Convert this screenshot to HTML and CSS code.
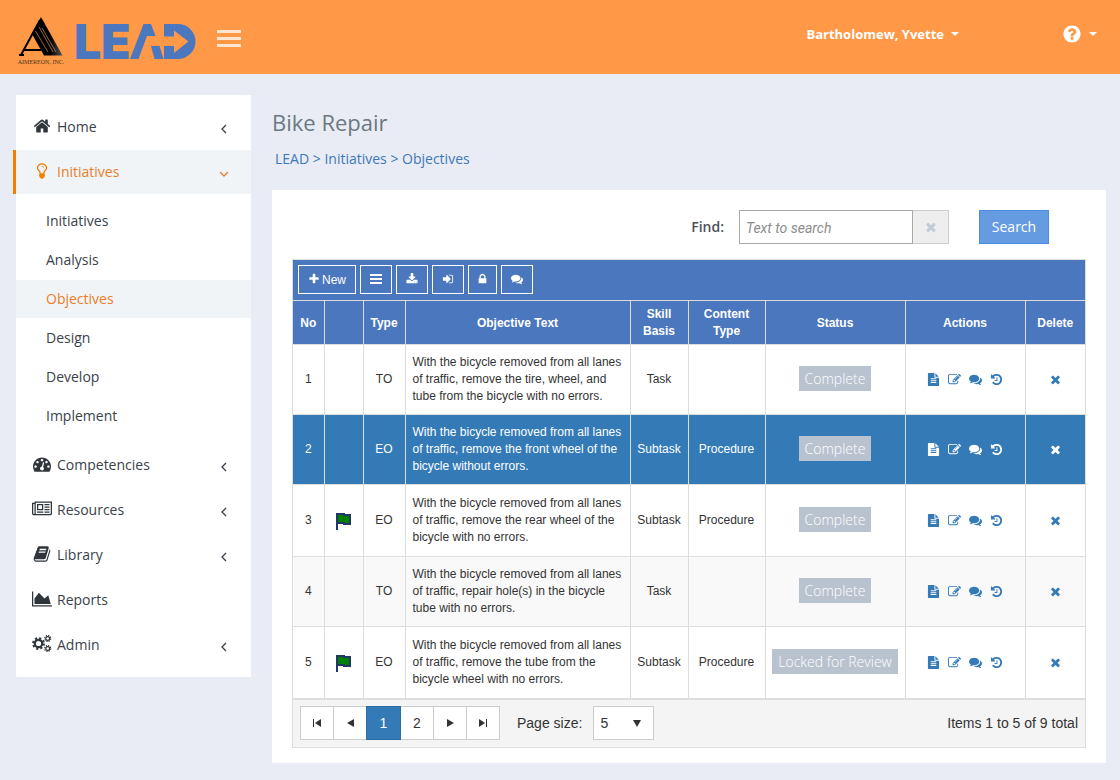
FILE: index.html
```html
<!DOCTYPE html>
<html lang="en">
<head>
<meta charset="utf-8">
<title>LEAD - Objectives</title>
<link rel="stylesheet" href="styles.css">
</head>
<body>
<svg class="sprite" aria-hidden="true">
  <symbol id="i-home" viewBox="0 0 1792 1792"><path d="M1472 992v480q0 26-19 45t-45 19h-384v-384h-256v384h-384q-26 0-45-19t-19-45v-480q0-1 .5-3t.5-3l575-474 575 474q1 2 1 6zm223-69l-62 74q-8 9-21 11h-3q-13 0-21-7l-692-577-692 577q-12 8-24 7-13-2-21-11l-62-74q-8-10-7-23.5t11-21.5l719-599q32-26 76-26t76 26l244 204v-195q0-14 9-23t23-9h192q14 0 23 9t9 23v408l219 182q10 8 11 21.5t-7 23.5z"/></symbol>
  <symbol id="i-bulb" viewBox="0 0 1792 1792"><path d="M1120 576q0 13-9.500 22.500t-22.500 9.500-22.500-9.500-9.500-22.500q0-46-54-71t-106-25q-13 0-22.500-9.500t-9.500-22.500 9.500-22.500 22.500-9.500q50 0 99.500 16t87 54 37.500 90zm160 0q0-72-34.500-134t-90-101.500-123-62-136.500-22.500-136.500 22.500-123 62-90 101.500-34.500 134q0 101 68 180 10 11 30.500 33t30.500 33q128 153 141 298h228q13-145 141-298 10-11 30.500-33t30.500-33q68-79 68-180zm128 0q0 155-103 268-45 49-74.500 87t-59.500 95.500-34 107.500q47 28 47 82 0 37-25 64 25 27 25 64 0 52-45 81 13 23 13 47 0 46-31.500 71t-77.500 25q-20 44-60 70t-87 26-87-26-60-70q-46 0-77.500-25t-31.500-71q0-24 13-47-45-29-45-81 0-37 25-64-25-27-25-64 0-54 47-82-4-50-34-107.500t-59.500-95.500-74.500-87q-103-113-103-268 0-99 44.500-184.500t117-142 164-89 186.500-32.500 186.500 32.500 164 89 117 142 44.500 184.500z"/></symbol>
  <symbol id="i-gauge" viewBox="0 0 1792 1792"><path d="M384 1152q0-53-37.500-90.500t-90.500-37.500-90.500 37.500-37.500 90.500 37.500 90.500 90.500 37.500 90.500-37.500 37.500-90.500zm192-448q0-53-37.500-90.500t-90.500-37.500-90.500 37.500-37.500 90.500 37.500 90.500 90.500 37.500 90.500-37.500 37.500-90.500zm428 481l101-382q6-26-7.500-48.500t-38.500-29.500-48 6.500-30 39.500l-101 382q-60 5-107 43.500t-63 98.500q-20 77 20 146t117 89 146-20 89-117q16-60-6-117t-72-91zm660-33q0-53-37.500-90.500t-90.500-37.500-90.500 37.500-37.500 90.500 37.500 90.500 90.500 37.500 90.500-37.500 37.500-90.500zm-640-640q0-53-37.500-90.500t-90.500-37.500-90.500 37.500-37.500 90.500 37.500 90.500 90.500 37.500 90.500-37.500 37.500-90.500zm448 192q0-53-37.500-90.500t-90.500-37.500-90.500 37.500-37.500 90.500 37.500 90.500 90.500 37.500 90.500-37.500 37.500-90.500zm320 448q0 261-141 483-19 29-54 29h-1402q-35 0-54-29-141-221-141-483 0-182 71-348t191-286 286-191 348-71 348 71 286 191 191 286 71 348z"/></symbol>
  <symbol id="i-news" viewBox="0 0 2048 1792"><path d="M1024 512h-384v384h384v-384zm128 640v128h-640v-128h640zm0-768v640h-640v-640h640zm640 768v128h-512v-128h512zm0-256v128h-512v-128h512zm0-256v128h-512v-128h512zm0-256v128h-512v-128h512zm-1536 960v-960h-128v960q0 26 19 45t45 19 45-19 19-45zm1664 0v-1088h-1536v1088q0 33-11 64h1483q26 0 45-19t19-45zm128-1216v1216q0 80-56 136t-136 56h-1664q-80 0-136-56t-56-136v-1088h256v-128h1792z"/></symbol>
  <symbol id="i-book" viewBox="0 0 1792 1792"><path d="M1703 478q40 57 18 129l-275 906q-19 64-76.500 107.500t-122.500 43.500h-923q-77 0-148.500-53.500t-99.500-131.500q-24-67-2-127 0-4 3-27t4-37q1-8-3-21.500t-3-19.500q2-11 8-21t16.500-23.500 16.500-23.500q23-38 45-91.500t30-91.500q3-10 .5-30t-.5-28q3-11 17-28t17-23q21-36 42-92t25-90q1-9-2.500-32t.5-28q4-13 22-30.500t22-22.500q19-26 42.500-84.500t27.500-96.500q1-8-3-25.500t-2-26.500q2-8 9-18t18-23 17-21q8-12 16.500-30.500t15-35 16-36 19.500-32 26.500-23.500 36-11.500 47.500 5.500l-1 3q38-9 51-9h761q74 0 114 56t18 130l-274 906q-36 119-71.500 153.500t-128.500 34.500h-869q-27 0-38 15-11 16-1 43 24 70 144 70h923q29 0 56-15.500t35-41.500l300-987q7-22 5-57 38 15 59 43zm-1064 2q-4 13 2 22.500t20 9.500h608q13 0 25.500-9.500t16.500-22.500l21-64q4-13-2-22.500t-20-9.500h-608q-13 0-25.500 9.500t-16.500 22.500zm-83 256q-4 13 2 22.500t20 9.500h608q13 0 25.500-9.500t16.500-22.500l21-64q4-13-2-22.500t-20-9.500h-608q-13 0-25.500 9.500t-16.500 22.500z"/></symbol>
  <symbol id="i-chart" viewBox="0 0 2048 1792"><path d="M2048 1536v128h-2048v-1536h128v1408h1920zm-384-1024l256 896h-1664v-576l448-576 576 576z"/></symbol>
  <symbol id="i-cogs" viewBox="0 0 20 18">
    <g fill="none" stroke="currentColor">
      <circle cx="6.500" cy="8.500" r="3.700" stroke-width="2.200"/><circle cx="6.500" cy="8.500" r="5.500" stroke-width="1.800" stroke-dasharray="2.200 2.120"/>
      <circle cx="15.700" cy="3.500" r="1.900" stroke-width="1.200"/><circle cx="15.700" cy="3.500" r="3" stroke-width="1.200" stroke-dasharray="1.300 1.056"/>
      <circle cx="15.700" cy="13.500" r="1.900" stroke-width="1.200"/><circle cx="15.700" cy="13.500" r="3" stroke-width="1.200" stroke-dasharray="1.300 1.056"/>
    </g>
  </symbol>
  <symbol id="i-left" viewBox="0 0 10 10"><path d="M7 1L3 5l4 4" fill="none" stroke="currentColor" stroke-width="1.300"/></symbol>
  <symbol id="i-down" viewBox="0 0 10 10"><path d="M1 3l4 4 4-4" fill="none" stroke="currentColor" stroke-width="1.300"/></symbol>
  <symbol id="i-plus" viewBox="0 0 1792 1792"><path d="M1600 736v192q0 40-28 68t-68 28h-416v416q0 40-28 68t-68 28h-192q-40 0-68-28t-28-68v-416h-416q-40 0-68-28t-28-68v-192q0-40 28-68t68-28h416v-416q0-40 28-68t68-28h192q40 0 68 28t28 68v416h416q40 0 68 28t28 68z"/></symbol>
  <symbol id="i-bars" viewBox="0 0 12 12"><path d="M0 1h12v2H0zM0 5h12v2H0zM0 9h12v2H0z"/></symbol>
  <symbol id="i-times" viewBox="0 0 1792 1792"><path d="M1490 1322q0 40-28 68l-136 136q-28 28-68 28t-68-28l-294-294-294 294q-28 28-68 28t-68-28l-136-136q-28-28-28-68t28-68l294-294-294-294q-28-28-28-68t28-68l136-136q28-28 68-28t68 28l294 294 294-294q28-28 68-28t68 28l136 136q28 28 28 68t-28 68l-294 294 294 294q28 28 28 68z"/></symbol>
  <symbol id="i-help" viewBox="0 0 1792 1792"><path d="M1024 1376v-192q0-14-9-23t-23-9h-192q-14 0-23 9t-9 23v192q0 14 9 23t23 9h192q14 0 23-9t9-23zm256-672q0-88-55.500-163t-138.500-116-170-41q-243 0-371 213-15 24 8 42l132 100q7 6 19 6 16 0 25-12 53-68 86-92 34-24 86-24 48 0 85.500 26t37.500 59q0 38-20 61t-68 45q-63 28-115.500 86.500t-52.500 125.500v36q0 14 9 23t23 9h192q14 0 23-9t9-23q0-19 21.500-49.500t54.500-49.500q32-18 49-28.500t46-35 44.500-48 28-60.500 12.500-81zm384 192q0 209-103 385.500t-279.500 279.500-385.500 103-385.500-103-279.500-279.500-103-385.500 103-385.500 279.500-279.500 385.500-103 385.500 103 279.500 279.500 103 385.500z"/></symbol>
  <symbol id="i-lock" viewBox="256 0 1280 1792"><path d="M640 768h512v-192q0-106-75-181t-181-75-181 75-75 181v192zm832 96v576q0 40-28 68t-68 28h-960q-40 0-68-28t-28-68v-576q0-40 28-68t68-28h32v-192q0-184 132-316t316-132 316 132 132 316v192h32q40 0 68 28t28 68z"/></symbol>
  <symbol id="i-download" viewBox="0 0 1792 1792"><path d="M1344 1344q0-26-19-45t-45-19-45 19-19 45 19 45 45 19 45-19 19-45zm256 0q0-26-19-45t-45-19-45 19-19 45 19 45 45 19 45-19 19-45zm128-224v320q0 40-28 68t-68 28h-1472q-40 0-68-28t-28-68v-320q0-40 28-68t68-28h465l135 136q58 56 136 56t136-56l136-136h464q40 0 68 28t28 68zm-325-569q17 41-14 70l-448 448q-18 19-45 19t-45-19l-448-448q-31-29-14-70 17-39 59-39h256v-448q0-26 19-45t45-19h256q26 0 45 19t19 45v448h256q42 0 59 39z"/></symbol>
  <symbol id="i-signin" viewBox="0 0 1792 1792"><path d="M1312 896q0 26-19 45l-544 544q-19 19-45 19t-45-19-19-45v-288h-448q-26 0-45-19t-19-45v-384q0-26 19-45t45-19h448v-288q0-26 19-45t45-19 45 19l544 544q19 19 19 45zm352-352v704q0 119-84.500 203.500t-203.500 84.500h-320q-13 0-22.500-9.500t-9.500-22.500q0-4-1-20t-.5-26.500 3-23.500 10-19.500 20.500-6.500h320q66 0 113-47t47-113v-704q0-66-47-113t-113-47h-312l-11.500-1-11.500-3-8-5.500-7-9-2-13.500q0-4-1-20t-.5-26.500 3-23.500 10-19.500 20.500-6.500h320q119 0 203.500 84.500t84.500 203.500z"/></symbol>
  <symbol id="i-comments" viewBox="0 0 1792 1792"><path d="M1408 768q0 139-94 257t-256.500 186.500-353.500 68.500q-86 0-176-16-124 88-278 128-36 9-86 16h-3q-11 0-20.500-8t-11.500-21q-1-3-1-6.500t.5-6.500 2-6l2.500-5 3.500-5.500 4-5 4.500-5 4-4.500q5-6 23-25t26-29.500 22.500-29 25-38.500 20.500-44q-124-72-195-177t-71-224q0-139 94-257t256.500-186.500 353.500-68.500 353.500 68.500 256.500 186.500 94 257zm384 256q0 120-71 224.500t-195 176.500q10 24 20.500 44t25 38.500 22.500 29 26 29.500 23 25q1 1 4 4.500t4.500 5 4 5 3.500 5.500l2.500 5 2 6 .5 6.500-1 6.500q-3 14-13 22t-22 7q-50-7-86-16-154-40-278-128-90 16-176 16-271 0-472-132 58 4 88 4 161 0 309-45t264-129q125-92 192-212t67-254q0-77-23-152 129 71 204 178t75 230z"/></symbol>
  <symbol id="i-file" viewBox="0 0 1792 1792"><path d="M1596 476q14 14 28 36h-472v-472q22 14 36 28zm-476 164h544v1056q0 40-28 68t-68 28h-1344q-40 0-68-28t-28-68v-1600q0-40 28-68t68-28h800v544q0 40 28 68t68 28zm160 736v-128h-768v128zm0-256v-128h-768v128zm0-256v-128h-768v128z"/></symbol>
  <symbol id="i-edit" viewBox="0 0 1792 1792"><path d="M888 1184l116-116-152-152-116 116v56h96v96h56zm440-720q-16-16-33 1l-350 350q-17 17-1 33t33-1l350-350q17-17 1-33zm80 594v190q0 119-84.500 203.500t-203.500 84.500h-832q-119 0-203.500-84.500t-84.500-203.500v-832q0-119 84.500-203.500t203.500-84.500h832q63 0 117 25 15 7 18 23 3 17-9 29l-49 49q-14 14-32 8-23-6-45-6h-832q-66 0-113 47t-47 113v832q0 66 47 113t113 47h832q66 0 113-47t47-113v-126q0-13 9-22l64-64q15-15 35-7t20 29zm-96-738l288 288-672 672h-288v-288zm444 132l-92 92-288-288 92-92q28-28 68-28t68 28l152 152q28 28 28 68t-28 68z"/></symbol>
  <symbol id="i-history" viewBox="0 0 1792 1792"><path d="M1664 896q0 156-61 298t-164 245-245 164-298 61q-172 0-327-72.500t-264-204.500q-7-10-6.500-22.500t8.500-20.500l137-138q10-9 25-9 16 2 23 12 73 95 179 147t225 52q104 0 198.500-40.500t163.500-109.500 109.500-163.500 40.500-198.500-40.500-198.500-109.500-163.500-163.500-109.500-198.500-40.500q-98 0-188 35.500t-160 101.500l137 138q31 30 14 69-17 40-59 40h-448q-26 0-45-19t-19-45v-448q0-42 40-59 39-17 69 14l130 129q107-101 244.500-156.500t284.500-55.500q156 0 298 61t245 164 164 245 61 298zm-640-288v448q0 14-9 23t-23 9h-320q-14 0-23-9t-9-23v-64q0-14 9-23t23-9h224v-352q0-14 9-23t23-9h64q14 0 23 9t9 23z"/></symbol>
  <symbol id="i-flag" viewBox="0 0 16 17"><path d="M1 17V1h7v1h6v9H8v-1H1" fill="#008000" stroke="#1f3864" stroke-width="2"/></symbol>
  <symbol id="i-first" viewBox="0 0 8 8"><path d="M0 0h1v8H0zM8 0v8L2 4z"/></symbol>
  <symbol id="i-prev" viewBox="0 0 8 8"><path d="M8 0v8L1 4z"/></symbol>
  <symbol id="i-next" viewBox="0 0 8 8"><path d="M1 0v8l7-4z"/></symbol>
  <symbol id="i-last" viewBox="0 0 8 8"><path d="M7 0h1v8H7zM0 0v8l6-4z"/></symbol>
</svg>

<header class="topbar">
  <a class="brand" href="#" aria-label="Aimereon LEAD">
    <svg class="emblem" viewBox="0 0 50 50">
      <defs><linearGradient id="leg" x1="0" x2="1"><stop offset="0.600" stop-color="#000"/><stop offset="1" stop-color="#555"/></linearGradient></defs>
      <path d="M24 1L45.500 39.500H27L15 18z" fill="url(#leg)"/>
      <path d="M23 4L4 39M6 34h18M2 39h5" fill="none" stroke="#000" stroke-width="2"/>
      <path d="M18.500 15L31 36M22 11l14 25M25 12l14 24" fill="none" stroke="#d88b52" stroke-width="0.700"/>
      <text class="emblem-name" x="24" y="48" text-anchor="middle">AIMEREON, INC.</text>
    </svg>
    <svg class="wordmark" viewBox="0 0 119 36">
      <text class="wordmark-text" x="-3" y="35">L</text>
      <text class="wordmark-text" x="24" y="35">E</text>
      <path d="M53 35L66.500 0H74l4.500 12H70l-8.500 23zM74 22h8.500l4 13H77.500z"/>
      <path d="M87 0h14a17.500 17.500 0 0 1 0 35H87V22h10v7l14.500-11.500L97 6.500v6H87z"/>
    </svg>
  </a>
  <button class="menu-toggle" type="button" aria-label="Toggle menu"><span></span><span></span><span></span></button>
  <nav class="account">
    <button class="account-button user" type="button">Bartholomew, Yvette <span class="caret"></span></button>
    <button class="account-button" type="button" aria-label="Help"><svg class="help-icon"><use href="#i-help"/></svg><span class="caret"></span></button>
  </nav>
</header>

<div class="page">
  <nav class="sidebar">
    <a class="nav-item" href="#"><svg class="nav-icon"><use href="#i-home"/></svg><span>Home</span><svg class="angle"><use href="#i-left"/></svg></a>
    <a class="nav-item active" href="#"><svg class="nav-icon"><use href="#i-bulb"/></svg><span>Initiatives</span><svg class="angle"><use href="#i-down"/></svg></a>
    <div class="subnav">
      <a href="#">Initiatives</a>
      <a href="#">Analysis</a>
      <a class="current" href="#">Objectives</a>
      <a href="#">Design</a>
      <a href="#">Develop</a>
      <a href="#">Implement</a>
    </div>
    <a class="nav-item" href="#"><svg class="nav-icon"><use href="#i-gauge"/></svg><span>Competencies</span><svg class="angle"><use href="#i-left"/></svg></a>
    <a class="nav-item" href="#"><svg class="nav-icon"><use href="#i-news"/></svg><span>Resources</span><svg class="angle"><use href="#i-left"/></svg></a>
    <a class="nav-item" href="#"><svg class="nav-icon"><use href="#i-book"/></svg><span>Library</span><svg class="angle"><use href="#i-left"/></svg></a>
    <a class="nav-item" href="#"><svg class="nav-icon"><use href="#i-chart"/></svg><span>Reports</span></a>
    <a class="nav-item" href="#"><svg class="nav-icon"><use href="#i-cogs"/></svg><span>Admin</span><svg class="angle"><use href="#i-left"/></svg></a>
  </nav>

  <main class="main">
    <h1 class="title">Bike Repair</h1>
    <nav class="breadcrumb"><a href="#">LEAD</a> &gt; <a href="#">Initiatives</a> &gt; <a href="#">Objectives</a></nav>

    <section class="card">
      <form class="search">
        <label for="find">Find:</label>
        <div class="search-group">
          <input id="find" class="search-input" type="text" placeholder="Text to search">
          <button class="search-clear" type="button" aria-label="Clear"><svg class="icon"><use href="#i-times"/></svg></button>
        </div>
        <button class="search-button" type="button">Search</button>
      </form>

      <div class="grid">
        <div class="toolbar">
          <button class="tool" type="button"><svg class="icon"><use href="#i-plus"/></svg>New</button>
          <button class="tool" type="button" aria-label="List"><svg class="icon"><use href="#i-bars"/></svg></button>
          <button class="tool" type="button" aria-label="Download"><svg class="icon"><use href="#i-download"/></svg></button>
          <button class="tool" type="button" aria-label="Import"><svg class="icon"><use href="#i-signin"/></svg></button>
          <button class="tool" type="button" aria-label="Lock"><svg class="icon narrow"><use href="#i-lock"/></svg></button>
          <button class="tool" type="button" aria-label="Comments"><svg class="icon"><use href="#i-comments"/></svg></button>
        </div>
        <table class="objectives">
          <colgroup><col class="c-no"><col class="c-flag"><col class="c-type"><col><col class="c-skill"><col class="c-content"><col class="c-status"><col class="c-actions"><col class="c-delete"></colgroup>
          <thead>
            <tr><th>No</th><th></th><th>Type</th><th>Objective Text</th><th>Skill Basis</th><th>Content Type</th><th>Status</th><th>Actions</th><th>Delete</th></tr>
          </thead>
          <tbody>
            <tr>
              <td>1</td><td></td><td>TO</td><td class="text">With the bicycle removed from all lanes of traffic, remove the tire, wheel, and tube from the bicycle with no errors.</td><td>Task</td><td></td>
              <td><span class="status">Complete</span></td>
              <td><div class="actions"><a href="#" aria-label="View"><svg class="icon"><use href="#i-file"/></svg></a><a href="#" aria-label="Edit"><svg class="icon"><use href="#i-edit"/></svg></a><a href="#" aria-label="Comments"><svg class="icon"><use href="#i-comments"/></svg></a><a href="#" aria-label="History"><svg class="icon"><use href="#i-history"/></svg></a></div></td>
              <td><div class="actions"><a href="#" aria-label="Delete"><svg class="icon"><use href="#i-times"/></svg></a></div></td>
            </tr>
            <tr class="selected">
              <td>2</td><td></td><td>EO</td><td class="text">With the bicycle removed from all lanes of traffic, remove the front wheel of the bicycle without errors.</td><td>Subtask</td><td>Procedure</td>
              <td><span class="status">Complete</span></td>
              <td><div class="actions"><a href="#" aria-label="View"><svg class="icon"><use href="#i-file"/></svg></a><a href="#" aria-label="Edit"><svg class="icon"><use href="#i-edit"/></svg></a><a href="#" aria-label="Comments"><svg class="icon"><use href="#i-comments"/></svg></a><a href="#" aria-label="History"><svg class="icon"><use href="#i-history"/></svg></a></div></td>
              <td><div class="actions"><a href="#" aria-label="Delete"><svg class="icon"><use href="#i-times"/></svg></a></div></td>
            </tr>
            <tr class="flagged">
              <td>3</td><td><svg class="flag" role="img" aria-label="Flagged"><use href="#i-flag"/></svg></td><td>EO</td><td class="text">With the bicycle removed from all lanes of traffic, remove the rear wheel of the bicycle with no errors.</td><td>Subtask</td><td>Procedure</td>
              <td><span class="status">Complete</span></td>
              <td><div class="actions"><a href="#" aria-label="View"><svg class="icon"><use href="#i-file"/></svg></a><a href="#" aria-label="Edit"><svg class="icon"><use href="#i-edit"/></svg></a><a href="#" aria-label="Comments"><svg class="icon"><use href="#i-comments"/></svg></a><a href="#" aria-label="History"><svg class="icon"><use href="#i-history"/></svg></a></div></td>
              <td><div class="actions"><a href="#" aria-label="Delete"><svg class="icon"><use href="#i-times"/></svg></a></div></td>
            </tr>
            <tr class="alt">
              <td>4</td><td></td><td>TO</td><td class="text">With the bicycle removed from all lanes of traffic, repair hole(s) in the bicycle tube with no errors.</td><td>Task</td><td></td>
              <td><span class="status">Complete</span></td>
              <td><div class="actions"><a href="#" aria-label="View"><svg class="icon"><use href="#i-file"/></svg></a><a href="#" aria-label="Edit"><svg class="icon"><use href="#i-edit"/></svg></a><a href="#" aria-label="Comments"><svg class="icon"><use href="#i-comments"/></svg></a><a href="#" aria-label="History"><svg class="icon"><use href="#i-history"/></svg></a></div></td>
              <td><div class="actions"><a href="#" aria-label="Delete"><svg class="icon"><use href="#i-times"/></svg></a></div></td>
            </tr>
            <tr class="flagged">
              <td>5</td><td><svg class="flag" role="img" aria-label="Flagged"><use href="#i-flag"/></svg></td><td>EO</td><td class="text">With the bicycle removed from all lanes of traffic, remove the tube from the bicycle wheel with no errors.</td><td>Subtask</td><td>Procedure</td>
              <td><span class="status">Locked for Review</span></td>
              <td><div class="actions"><a href="#" aria-label="View"><svg class="icon"><use href="#i-file"/></svg></a><a href="#" aria-label="Edit"><svg class="icon"><use href="#i-edit"/></svg></a><a href="#" aria-label="Comments"><svg class="icon"><use href="#i-comments"/></svg></a><a href="#" aria-label="History"><svg class="icon"><use href="#i-history"/></svg></a></div></td>
              <td><div class="actions"><a href="#" aria-label="Delete"><svg class="icon"><use href="#i-times"/></svg></a></div></td>
            </tr>
          </tbody>
        </table>
        <div class="pager">
          <div class="pages">
            <button type="button" aria-label="First page"><svg class="page-icon"><use href="#i-first"/></svg></button>
            <button type="button" aria-label="Previous page"><svg class="page-icon"><use href="#i-prev"/></svg></button>
            <button class="current" type="button">1</button>
            <button type="button">2</button>
            <button type="button" aria-label="Next page"><svg class="page-icon"><use href="#i-next"/></svg></button>
            <button type="button" aria-label="Last page"><svg class="page-icon"><use href="#i-last"/></svg></button>
          </div>
          <label for="size">Page size:</label>
          <div class="size-box"><select id="size"><option>5</option><option>10</option><option>20</option></select></div>
          <span class="summary">Items 1 to 5 of 9 total</span>
        </div>
      </div>
    </section>
  </main>
</div>
</body>
</html>
```
FILE: styles.css
```css
* { box-sizing: border-box; }

body {
  margin: 0;
  background: #e9ecf4;
  color: #333;
  font: 14px/20px "Open Sans", sans-serif;
}

a { color: inherit; text-decoration: none; }
button, input, select { margin: 0; font: inherit; border-radius: 0; }
svg { display: block; fill: currentColor; }

.sprite { position: absolute; width: 0; height: 0; }
.icon { width: 12px; height: 12px; }

/* Top bar */
.topbar {
  display: flex;
  align-items: flex-start;
  height: 74px;
  padding: 16px 23px 0 17px;
  background: #ff9947;
}
.brand { display: flex; gap: 10px; color: #4b77be; }
.emblem { width: 50px; height: 50px; }
.emblem-name { font: 6px "Liberation Serif", serif; fill: #4a3520; }
.wordmark { width: 119px; height: 36px; margin-top: 8px; overflow: visible; }
.wordmark-text { font: 900 48px Inter, sans-serif; }
.menu-toggle {
  display: flex;
  flex-direction: column;
  gap: 4px;
  width: 24px;
  margin: 14px 0 0 21px;
  padding: 0;
  border: 0;
  background: none;
}
.menu-toggle span { height: 3px; background: #ffe6d2; }
.account { display: flex; gap: 103px; margin-left: auto; padding-top: 8px; }
.account-button {
  display: flex;
  align-items: center;
  gap: 7px;
  height: 20px;
  padding: 0;
  border: 0;
  background: none;
  color: #fff;
}
.user { font-size: 13px; font-weight: 700; }
.help-icon { width: 20px; height: 20px; }
.caret { border: 4px solid transparent; border-top-color: #fff; border-bottom: 0; }

/* Page frame */
.page { display: flex; gap: 21px; padding: 21px 14px 17px 16px; align-items: flex-start; }

/* Sidebar */
.sidebar { flex: none; width: 235px; padding: 10px 0 9px; background: #fff; color: #3a424b; }
.nav-item {
  display: flex;
  align-items: center;
  height: 44px;
  margin-bottom: 1px;
  padding: 0 22px 0 16px;
}
.nav-icon { width: 20px; height: 18px; margin: 0 5px 2px 0; color: #2f353b; }
.angle { width: 10px; height: 10px; margin: 3px 0 0 auto; }
.nav-item.active {
  margin-left: -3px;
  border-left: 3px solid #f08000;
  background: #f1f4f7;
  color: #e87e2b;
}
.nav-item.active .nav-icon { color: #f08000; }
.subnav { display: flex; flex-direction: column; gap: 1px; padding: 7px 0 8px; }
.subnav a { height: 38px; padding: 0 30px; line-height: 38px; }
.subnav .current { background: #f1f4f7; color: #e87e2b; }

/* Main column */
.main { flex: 1; min-width: 0; }
.title { margin: 0; padding: 12px 0 14px; color: #697882; font-size: 22px; line-height: 30px; font-weight: 400; }
.breadcrumb { height: 39px; padding: 0 3px; color: #3d78b8; line-height: 16px; }
.card { padding: 20px 20px 15px; background: #fff; }

.search { display: flex; align-items: center; padding: 0 37px 15px 0; justify-content: flex-end; }
.search label { margin-right: 15px; color: #4b5157; font-weight: 600; }
.search-group { display: flex; height: 34px; margin-right: 30px; }
.search-input {
  width: 174px;
  padding: 2px 6px 0;
  border: 1px solid #a9a9a9;
  font-family: Roboto, sans-serif;
  font-style: italic;
}
.search-input::placeholder { color: #8c8c8c; opacity: 1; }
.search-clear {
  display: grid;
  place-items: center;
  width: 36px;
  padding: 0;
  border: 1px solid #ccc;
  border-left: 0;
  background: #eee;
  color: #c3cbd9;
}
.search-clear .icon { width: 14px; height: 14px; }
.search-button { width: 70px; height: 34px; padding: 0; border: 1px solid #4a8ddc; background: #659be0; color: #fff; }

/* Grid */
.grid { border: 1px solid #ddd; font-family: "Liberation Sans", Arial, sans-serif; }
.toolbar { display: flex; gap: 4px; height: 40px; padding: 5px; background: #4b77be; }
.tool {
  display: flex;
  align-items: center;
  justify-content: center;
  gap: 2px;
  height: 29px;
  padding: 0 9px;
  border: 1px solid #fff;
  background: none;
  color: #fff;
  font-size: 12px;
}
.tool .icon { margin-bottom: 1px; }
.tool .narrow { width: 9px; }
.objectives { width: 100%; border-collapse: collapse; table-layout: fixed; font-size: 12px; line-height: 17px; }
.c-no { width: 31px; }
.c-flag { width: 39px; }
.c-type { width: 42px; }
.c-skill { width: 58px; }
.c-content { width: 77px; }
.c-status { width: 140px; }
.c-actions { width: 120px; }
.c-delete { width: 60px; }
.objectives th, .objectives td { border: 1px solid #ddd; padding: 0; text-align: center; vertical-align: middle; }
.objectives tr > :first-child { border-left: 0; }
.objectives tr > :last-child { border-right: 0; }
.objectives th { height: 44px; padding: 1px 8px 0; background: #4b77be; color: #fff; font-weight: 700; }
.objectives th:first-child, .objectives th:nth-child(3) { padding: 1px 0 0; }
.objectives td { height: 70px; }
.objectives .flagged td { height: 72px; }
.objectives .text { padding: 0 7px; text-align: left; }
.objectives .alt { background: #f9f9f9; }
.objectives .selected { background: #337ab7; color: #fff; }
.flag { width: 16px; height: 17px; margin: 2px auto 0; }
.status {
  display: inline-block;
  margin-bottom: 3px;
  padding: 0 6px;
  background: #b9c3d0;
  color: #fff;
  font: 300 14px/25px "Open Sans", sans-serif;
}
.actions { display: flex; justify-content: center; gap: 8px; color: #337ab7; }
.actions .icon { width: 13px; height: 13px; }
.selected .actions { color: #fff; }

/* Pager */
.pager { display: flex; align-items: center; padding: 6px 7px 7px; border-top: 1px solid #ddd; background: #f4f4f4; }
.pages { display: flex; padding-right: 18px; }
.pages button {
  display: grid;
  place-items: center;
  width: 34px;
  height: 34px;
  margin-right: -1px;
  padding: 0;
  border: 1px solid #ccc;
  background: #fff;
  color: #333;
}
.pages .current { position: relative; width: 35px; border-color: #2e6da4; background: #337ab7; color: #fff; }
.pages .page-icon { width: 8px; height: 8px; }
.size-box { position: relative; margin-left: 11px; }
.size-box select { width: 61px; height: 34px; padding: 0 6px; border: 1px solid #ccc; background: #fff; color: #333; appearance: none; }
.size-box::after {
  content: "";
  position: absolute;
  top: 14px;
  right: 13px;
  border: 4px solid transparent;
  border-top: 7px solid #333;
  border-bottom: 0;
  pointer-events: none;
}
.summary { margin-left: auto; }
```
